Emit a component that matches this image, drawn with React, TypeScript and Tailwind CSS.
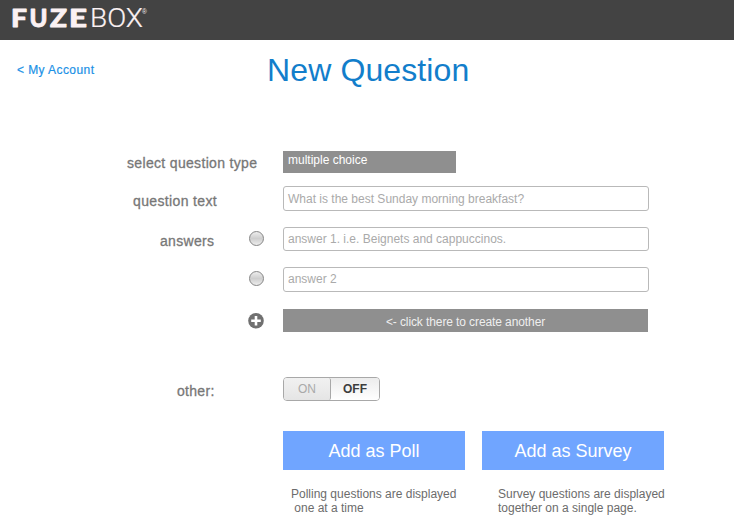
import type { ReactNode } from "react";

const heavy = [
  { ch: "F", x: 11, w: 16 },
  { ch: "U", x: 29.5, w: 18 },
  { ch: "Z", x: 50, w: 17 },
  { ch: "E", x: 69, w: 18 },
];

function Logo() {
  return (
    <svg width="150" height="40" viewBox="0 0 150 40" fill="#fbf1f3" aria-label="FUZEBOX">
      <text y="27" fontFamily="Lato, sans-serif" fontWeight="900" fontSize="24" stroke="#fbf1f3" strokeWidth="0.8" strokeLinejoin="round">
        {heavy.map((l) => (
          <tspan key={l.ch} x={l.x} textLength={l.w} lengthAdjust="spacingAndGlyphs">{l.ch}</tspan>
        ))}
      </text>
      <text x="90" y="27.3" fontFamily="Roboto, sans-serif" fontWeight="300" fontSize="25" textLength="53" lengthAdjust="spacingAndGlyphs" stroke="#fbf1f3" strokeWidth="0.2">BOX</text>
      <text x="142" y="14" fontFamily="Liberation Sans, sans-serif" fontSize="6.5">®</text>
    </svg>
  );
}

function Row({ label, icon, className, labelClass, children }: { label?: string; icon?: ReactNode; className: string; labelClass?: string; children: ReactNode }) {
  return (
    <div className={`flex items-start ${className}`}>
      <div className="flex w-[283px] shrink-0 items-start">
        {label && <span className={`whitespace-nowrap text-sm leading-4 text-[#777777] [-webkit-text-stroke:0.3px_#777777] ${labelClass}`}>{label}</span>}
        {icon && <span className="ml-auto mr-[18px]">{icon}</span>}
      </div>
      {children}
    </div>
  );
}

function Field({ text, className }: { text: string; className: string }) {
  return (
    <div className={`w-[366px] rounded-[3px] border border-[#b9b9b9] bg-white pl-1 text-xs text-[#aaaaaa] ${className}`}>{text}</div>
  );
}

function Radio() {
  return (
    <span className="mr-px mt-1 block size-[15px] rounded-full border border-[#858585] bg-linear-to-b from-[#ededed] via-[#cecece] to-[#ededed]" />
  );
}

function Plus() {
  return (
    <svg className="mr-px mt-1" width="16" height="16" viewBox="0 0 16 16">
      <circle cx="8" cy="7.8" r="7.8" fill="#707070" />
      <path d="M8 3v9.6M3.2 7.8h9.6" stroke="#fff" strokeWidth="2.6" />
    </svg>
  );
}

export default function App() {
  return (
    <div className="h-[515px] w-[734px] overflow-hidden bg-white font-['Liberation_Sans',Arial,sans-serif]">
      <header className="h-10 bg-[#434343]"><Logo /></header>
      <div className="flex h-[111px] items-start">
        <a className="ml-[17px] mt-[22px] w-[250px] text-xs leading-4 tracking-[0.42px] text-[#1b91e6] [-webkit-text-stroke:0.2px_#1b91e6]">&lt; My Account</a>
        <h1 className="mt-[11px] whitespace-nowrap text-[32px] leading-[38px] tracking-[0.12px] text-[#127ecb]">New Question</h1>
      </div>
      <Row className="h-[35px]" label="select question type" labelClass="ml-[127px] mt-1 tracking-[0.33px]">
        <div className="h-[22px] w-[173px] bg-[#8f8f8f] pl-[5px] text-xs leading-[19px] text-white">multiple choice</div>
      </Row>
      <Row className="h-[41px]" label="question text" labelClass="ml-[133px] mt-[7px] tracking-[0.36px]">
        <Field text="What is the best Sunday morning breakfast?" className="h-[25px] leading-[24px]" />
      </Row>
      <Row className="h-10" label="answers" labelClass="ml-[160px] mt-[6px] tracking-[0.3px]" icon={<Radio />}>
        <Field text="answer 1. i.e. Beignets and cappuccinos." className="h-6 leading-[23px]" />
      </Row>
      <Row className="h-[42px]" icon={<Radio />}>
        <Field text="answer 2" className="h-[25px] leading-[23px]" />
      </Row>
      <Row className="h-[68px]" icon={<Plus />}>
        <div className="h-[23px] w-[365px] bg-[#8f8f8f] text-center text-xs leading-[26px] tracking-[-0.1px] text-[#eeeeee]">&lt;- click there to create another</div>
      </Row>
      <Row className="h-[54px]" label="other:" labelClass="ml-[177px] mt-[6px] tracking-[0.3px]">
        <div className="flex h-6 w-[97px] overflow-hidden rounded-[4px] border border-[#a8a8a8] text-center text-xs leading-[22px]">
          <span className="w-[47px] rounded-r-[2px] border-r border-[#a8a8a8] bg-linear-to-b from-[#f1f1f1] to-[#e5e5e5] text-[#a9a9a9]">ON</span>
          <span className="flex-1 bg-linear-to-b from-[#ececec] to-white font-bold text-[#3d3d3d]">OFF</span>
        </div>
      </Row>
      <div className="ml-[283px] flex gap-[17px]">
        {[
          { title: "Add as Poll", note: "Polling questions are displayed\n one at a time", pad: "pl-2" },
          { title: "Add as Survey", note: "Survey questions are displayed\ntogether on a single page.", pad: "pl-4" },
        ].map((b) => (
          <div key={b.title} className="w-[182px]">
            <button className="block h-[39px] w-full bg-[#70a5ff] text-lg text-white">{b.title}</button>
            <p className={`mt-[17px] whitespace-pre text-xs leading-[14px] text-[#6c6c6c] ${b.pad}`}>{b.note}</p>
          </div>
        ))}
      </div>
    </div>
  );
}
